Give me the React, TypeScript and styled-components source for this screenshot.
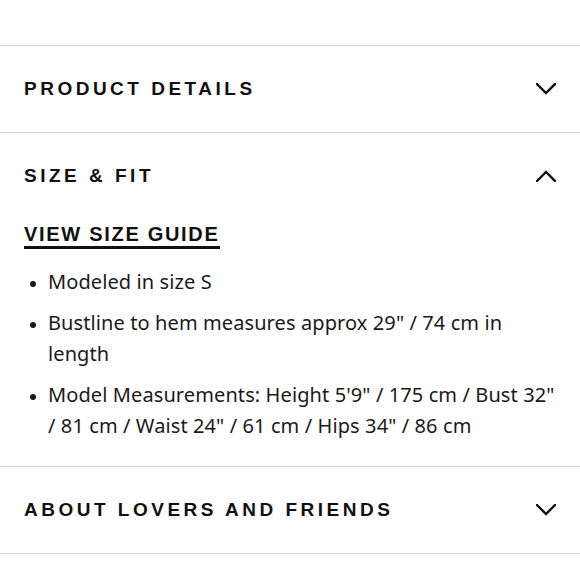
import styled, { createGlobalStyle } from 'styled-components'

const GlobalStyle = createGlobalStyle`
  body {
    margin: 0;
    background: #fff;
    color: #111;
    font-family: 'Noto Sans', 'Liberation Sans', sans-serif;
  }
`

const Page = styled.div`
  padding-top: 45px;
`

const Section = styled.section`
  border-top: 1px solid #d6d6d6;
  &:last-child {
    border-bottom: 1px solid #d6d6d6;
  }
`

const Header = styled.div`
  height: 86px;
  display: flex;
  align-items: center;
  justify-content: space-between;
  padding: 0 24px;
`

const Title = styled.h3`
  margin: 0;
  font-family: 'Liberation Sans', Arial, sans-serif;
  font-weight: 700;
  font-size: 19px;
  letter-spacing: 3.5px;
  color: #111;
`

const Body = styled.div`
  padding: 0 24px 25px;
`

const GuideLink = styled.a`
  display: inline-block;
  font-family: 'Liberation Sans', Arial, sans-serif;
  font-weight: 700;
  font-size: 20px;
  letter-spacing: 1.7px;
  line-height: 24px;
  color: #111;
  text-decoration: none;
  border-bottom: 3px solid #111;
  margin-top: 3px;
`

const List = styled.ul`
  margin: 17px 0 0;
  padding: 0 0 0 24px;
  display: flex;
  flex-direction: column;
  gap: 10px;
`

const Item = styled.li`
  font-size: 20px;
  line-height: 31px;
  letter-spacing: 0.1px;
  color: #1a1a1a;
  &::marker {
    font-size: 16px;
  }
`

const Chevron = ({ up }: { up?: boolean }) => (
  <svg width="20" height="12" viewBox="0 0 20 12" fill="none">
    <path
      d={up ? 'M1 11 L10 2 L19 11' : 'M1 1 L10 10 L19 1'}
      stroke="#111"
      strokeWidth="2.4"
      strokeLinecap="square"
    />
  </svg>
)

export default function App() {
  return (
    <>
      <GlobalStyle />
      <Page>
        <Section>
          <Header>
            <Title>PRODUCT DETAILS</Title>
            <Chevron />
          </Header>
        </Section>
        <Section>
          <Header>
            <Title>SIZE &amp; FIT</Title>
            <Chevron up />
          </Header>
          <Body>
            <GuideLink href="#">VIEW SIZE GUIDE</GuideLink>
            <List>
              <Item>Modeled in size S</Item>
              <Item>Bustline to hem measures approx 29" / 74 cm in length</Item>
              <Item>
                Model Measurements: Height 5'9" / 175 cm / Bust 32" / 81 cm / Waist 24" / 61 cm / Hips 34" / 86 cm
              </Item>
            </List>
          </Body>
        </Section>
        <Section>
          <Header>
            <Title>ABOUT LOVERS AND FRIENDS</Title>
            <Chevron />
          </Header>
        </Section>
      </Page>
    </>
  )
}
